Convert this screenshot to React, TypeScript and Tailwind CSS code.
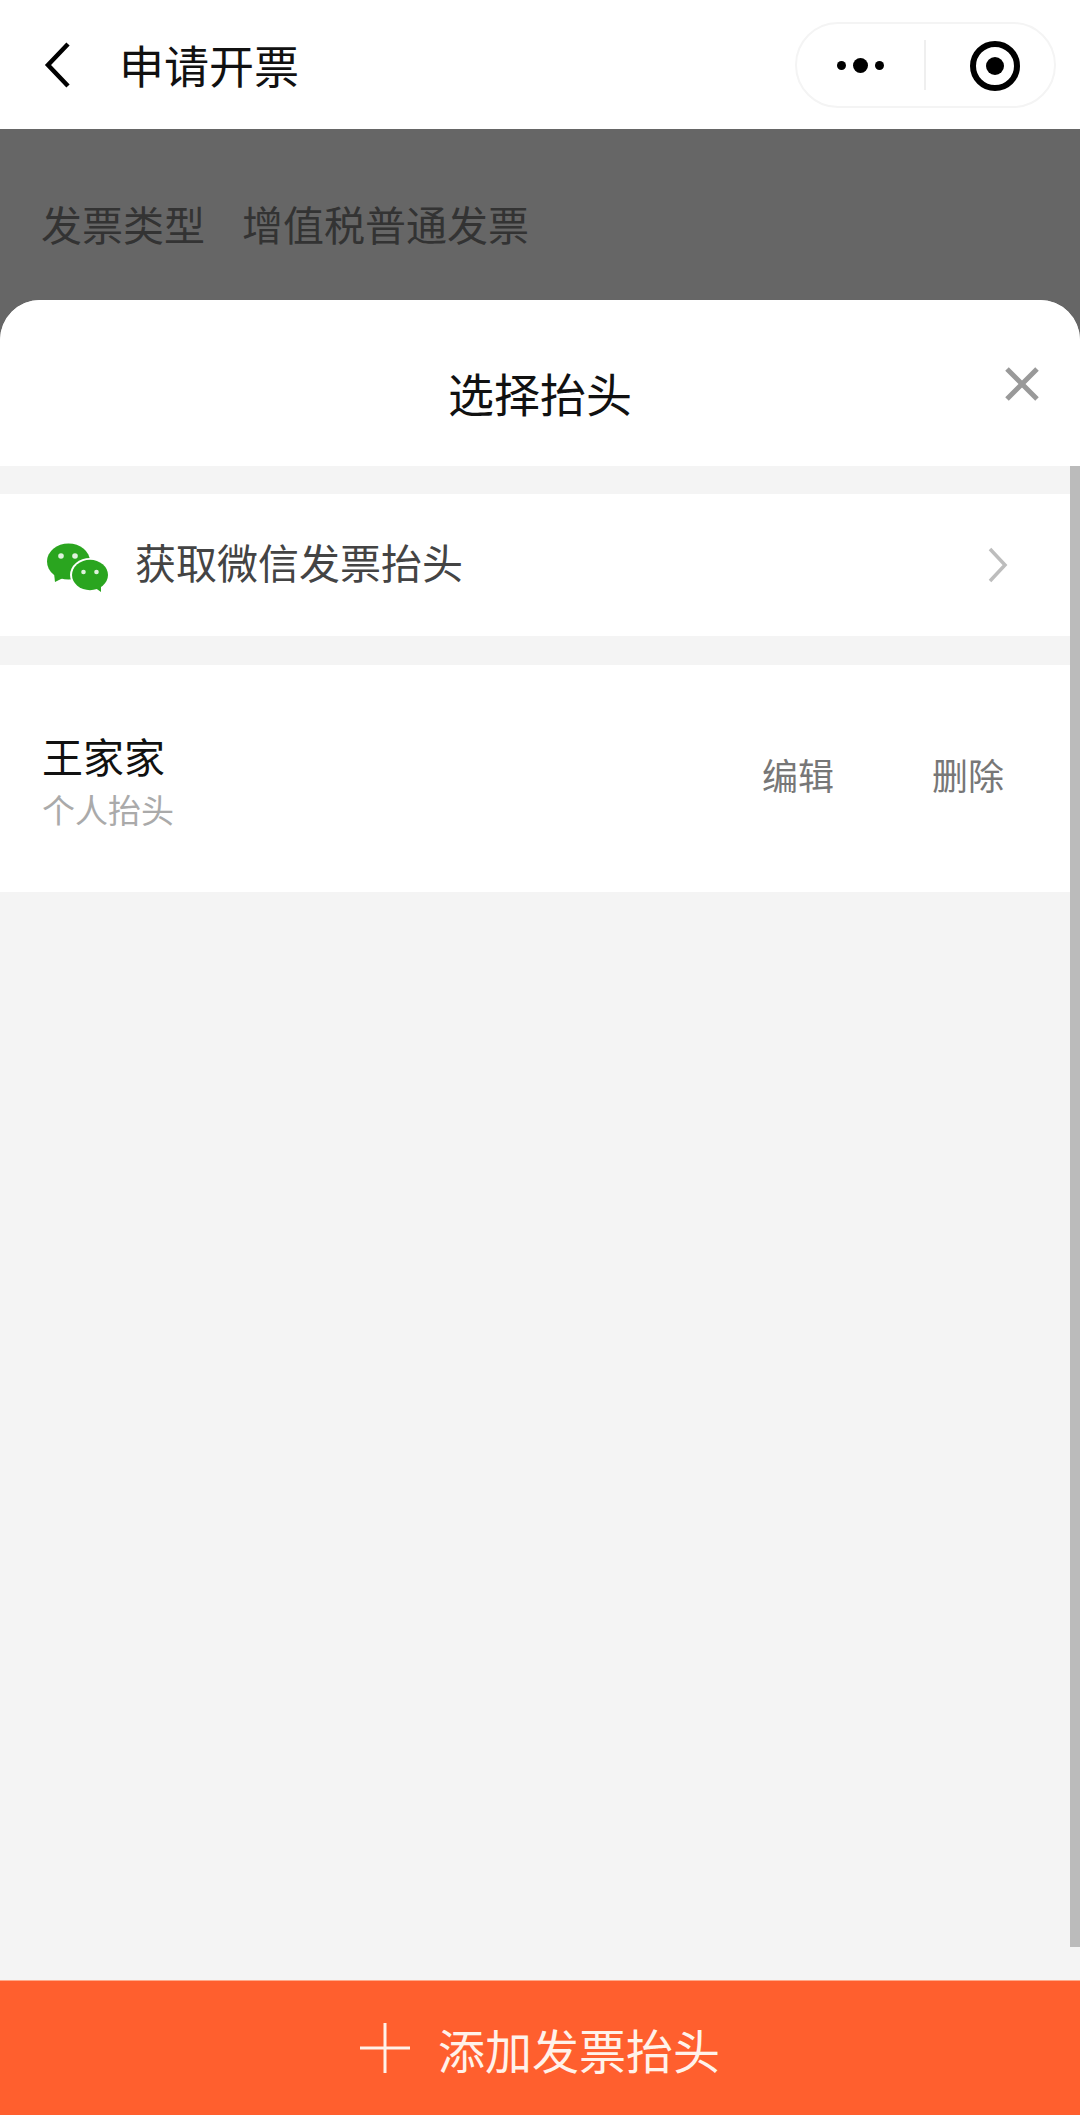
import React from "react";

const font = { fontFamily: '"Noto Sans CJK SC", "Noto Sans", sans-serif' };

function WeChatIcon() {
  return (
    <svg width="62" height="50" viewBox="0 0 62 50" className="mt-[5px] block shrink-0">
      <ellipse cx="21.5" cy="18.5" rx="21.5" ry="18" fill="#2aa51f" />
      <path d="M7 30 L8 39 L18 34 Z" fill="#2aa51f" />
      <circle cx="14" cy="13" r="2.8" fill="#fff" opacity="0.85" />
      <circle cx="28" cy="13" r="2.8" fill="#fff" opacity="0.85" />
      <ellipse cx="43" cy="32" rx="20" ry="17" fill="#fff" />
      <ellipse cx="43" cy="32" rx="18" ry="15.2" fill="#2aa51f" />
      <path d="M47 44 L54 49 L54 40 Z" fill="#2aa51f" />
      <circle cx="36.5" cy="29" r="2.3" fill="#fff" opacity="0.85" />
      <circle cx="49.5" cy="29" r="2.3" fill="#fff" opacity="0.85" />
    </svg>
  );
}

export default function App() {
  return (
    <div style={font} className="relative flex h-[2115px] w-[1080px] flex-col overflow-hidden bg-[#f4f4f4]">
      {/* Top navigation */}
      <header className="flex h-[129px] shrink-0 items-center bg-white pr-[24px]">
        <svg width="30" height="48" viewBox="0 0 30 48" className="ml-[43px] shrink-0">
          <path d="M25 3 L5 24 L25 45" fill="none" stroke="#000" strokeWidth="4.5" />
        </svg>
        <span className="ml-[46px] text-[45px] leading-none text-[#111]">申请开票</span>
        <div className="ml-auto flex h-[86px] w-[261px] items-center rounded-[43px] border-2 border-[#f4f4f4]">
          <div className="flex w-[127px] items-center justify-center gap-[7px] pt-[1px]">
            <span className="h-[9px] w-[9px] rounded-full bg-black" />
            <span className="h-[15px] w-[15px] rounded-full bg-black" />
            <span className="h-[9px] w-[9px] rounded-full bg-black" />
          </div>
          <span className="h-[50px] w-[2px] bg-[#efefef]" />
          <div className="flex flex-1 items-center justify-center pl-[9px] pt-[3px]">
            <span className="flex h-[50px] w-[50px] items-center justify-center rounded-full border-[6px] border-black">
              <span className="h-[18px] w-[18px] rounded-full bg-black" />
            </span>
          </div>
        </div>
      </header>

      {/* Dimmed page behind the sheet */}
      <div className="flex h-[171px] shrink-0 items-start bg-[#666666] pl-[41px] pt-[74px] text-[41px] leading-none text-[#333333]">
        <span className="w-[201px]">发票类型</span>
        <span>增值税普通发票</span>
      </div>

      {/* Bottom sheet */}
      <div className="flex flex-1 flex-col bg-[#666666]">
        <div className="flex flex-1 flex-col overflow-hidden rounded-t-[40px] bg-[#f4f4f4]">
          <div className="relative flex h-[166px] shrink-0 items-center justify-center bg-white pt-[18px]">
            <span className="text-[46px] leading-none text-[#111]">选择抬头</span>
            <svg width="36" height="36" viewBox="0 0 36 36" className="absolute left-[1004px] top-[66px]">
              <path d="M3 3 L33 33 M33 3 L3 33" stroke="#999" strokeWidth="5" fill="none" />
            </svg>
          </div>

          <div className="mt-[28px] flex h-[142px] shrink-0 items-center bg-white pl-[47px] pr-[72px]">
            <WeChatIcon />
            <span className="ml-[26px] pb-[8px] text-[41px] leading-none text-[#444]">获取微信发票抬头</span>
            <svg width="20" height="36" viewBox="0 0 20 36" className="ml-auto shrink-0">
              <path d="M2 2 L17 18 L2 34" fill="none" stroke="#bdbdbd" strokeWidth="3.5" />
            </svg>
          </div>

          <div className="mt-[29px] flex h-[227px] shrink-0 items-center justify-between bg-white pl-[42px] pr-[76px]">
            <div className="flex flex-col pt-[2px]">
              <span className="text-[41px] leading-[50px] text-[#111]">王家家</span>
              <span className="mt-[9px] text-[33px] leading-[40px] text-[#aaaaaa]">个人抬头</span>
            </div>
            <div className="flex gap-[98px] pb-[10px] text-[36px] leading-none text-[#777]">
              <span>编辑</span>
              <span>删除</span>
            </div>
          </div>
        </div>
      </div>

      {/* Add button */}
      <div className="flex h-[135px] shrink-0 items-center justify-center gap-[28px] border-t border-[#ffa98a] bg-[#ff5f2e] text-white">
        <svg width="50" height="50" viewBox="0 0 50 50" className="shrink-0">
          <path d="M25 0 V50 M0 25 H50" stroke="#fff2ea" strokeWidth="3" fill="none" />
        </svg>
        <span className="text-[47px] leading-none text-[#fff2ea]">添加发票抬头</span>
      </div>

      {/* Scrollbar overlay */}
      <div className="absolute left-[1070px] top-[466px] h-[1481px] w-[10px] bg-[#bbbbbb]" />
    </div>
  );
}
